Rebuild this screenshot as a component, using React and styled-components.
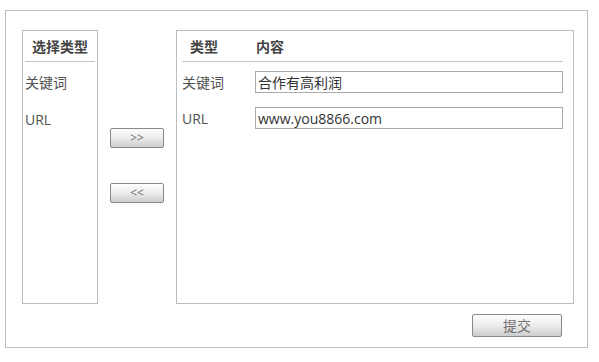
import React from "react";
import styled, { createGlobalStyle } from "styled-components";

const Global = createGlobalStyle`
  html, body { margin: 0; padding: 0; background: #fff; }
  body { font-family: "Open Sans", "Noto Sans CJK SC", sans-serif; }
`;

const Frame = styled.div`
  box-sizing: border-box;
  margin: 10px 0 0 5px;
  width: 583px;
  height: 338px;
  border: 1px solid #bdbdbd;
  padding: 19px 13px 0 16px;
  display: flex;
  flex-direction: column;
`;

const Main = styled.div`
  display: flex;
  height: 274px;
`;

const Panel = styled.div`
  box-sizing: border-box;
  width: ${(p) => p.$w}px;
  height: 100%;
  border: 1px solid #bdbdbd;
  display: flex;
  flex-direction: column;
  padding: 0 ${(p) => p.$pr}px 0 ${(p) => p.$pl}px;
`;

const Head = styled.div`
  height: 30px;
  border-bottom: 1px solid #c4c4c4;
  display: flex;
  align-items: center;
  justify-content: ${(p) => (p.$center ? "center" : "flex-start")};
  font-size: 14px;
  font-weight: bold;
  color: #444;
`;

const HeadCell = styled.span`
  width: ${(p) => p.$w}px;
  padding-left: ${(p) => p.$pl || 0}px;
  box-sizing: border-box;
`;

const List = styled.div`
  display: flex;
  flex-direction: column;
  gap: 13px;
  padding-top: 9px;
`;

const Item = styled.div`
  height: 24px;
  line-height: 24px;
  font-size: 14px;
  color: #505050;
`;

const Middle = styled.div`
  width: 78px;
  display: flex;
  flex-direction: column;
  align-items: center;
  padding-top: 98px;
  gap: 35px;
`;

const Btn = styled.button`
  box-sizing: border-box;
  width: ${(p) => p.$w}px;
  height: ${(p) => p.$h}px;
  border: 1px solid #888;
  border-radius: 2px;
  background: linear-gradient(#fefefe, #ececec 50%, #cdcdcd);
  color: #707070;
  font-family: "Open Sans", "Noto Sans CJK SC", sans-serif;
  font-size: ${(p) => p.$fs}px;
  padding: 0;
  line-height: 1;
  display: flex;
  align-items: center;
  justify-content: center;
`;

const Rows = styled.div`
  display: flex;
  flex-direction: column;
  gap: 14px;
  padding-top: 9px;
`;

const Row = styled.div`
  display: flex;
  align-items: center;
  height: 22px;
`;

const Label = styled.span`
  width: 73px;
  font-size: 14px;
  color: #505050;
`;

const Input = styled.input`
  box-sizing: border-box;
  width: 308px;
  height: 22px;
  border: 1px solid #a9a9a9;
  padding: 0 2px;
  font-family: "Open Sans", "Noto Sans CJK SC", sans-serif;
  font-size: 14px;
  color: #333;
  outline: none;
`;

const Footer = styled.div`
  display: flex;
  justify-content: flex-end;
  padding: 10px 12px 0 0;
`;

export default function App() {
  return (
    <>
      <Global />
      <Frame>
        <Main>
          <Panel $w={76} $pl={2} $pr={2}>
            <Head $center>选择类型</Head>
            <List>
              <Item>关键词</Item>
              <Item>URL</Item>
            </List>
          </Panel>
          <Middle>
            <Btn $w={54} $h={20} $fs={12}>&gt;&gt;</Btn>
            <Btn $w={54} $h={20} $fs={12}>&lt;&lt;</Btn>
          </Middle>
          <Panel $w={398} $pl={5} $pr={10}>
            <Head>
              <HeadCell $w={73} $pl={8}>类型</HeadCell>
              <HeadCell $w={100} $pl={1}>内容</HeadCell>
            </Head>
            <Rows>
              <Row>
                <Label>关键词</Label>
                <Input defaultValue="合作有高利润" />
              </Row>
              <Row>
                <Label>URL</Label>
                <Input defaultValue="www.you8866.com" />
              </Row>
            </Rows>
          </Panel>
        </Main>
        <Footer>
          <Btn $w={90} $h={23} $fs={14}>提交</Btn>
        </Footer>
      </Frame>
    </>
  );
}
